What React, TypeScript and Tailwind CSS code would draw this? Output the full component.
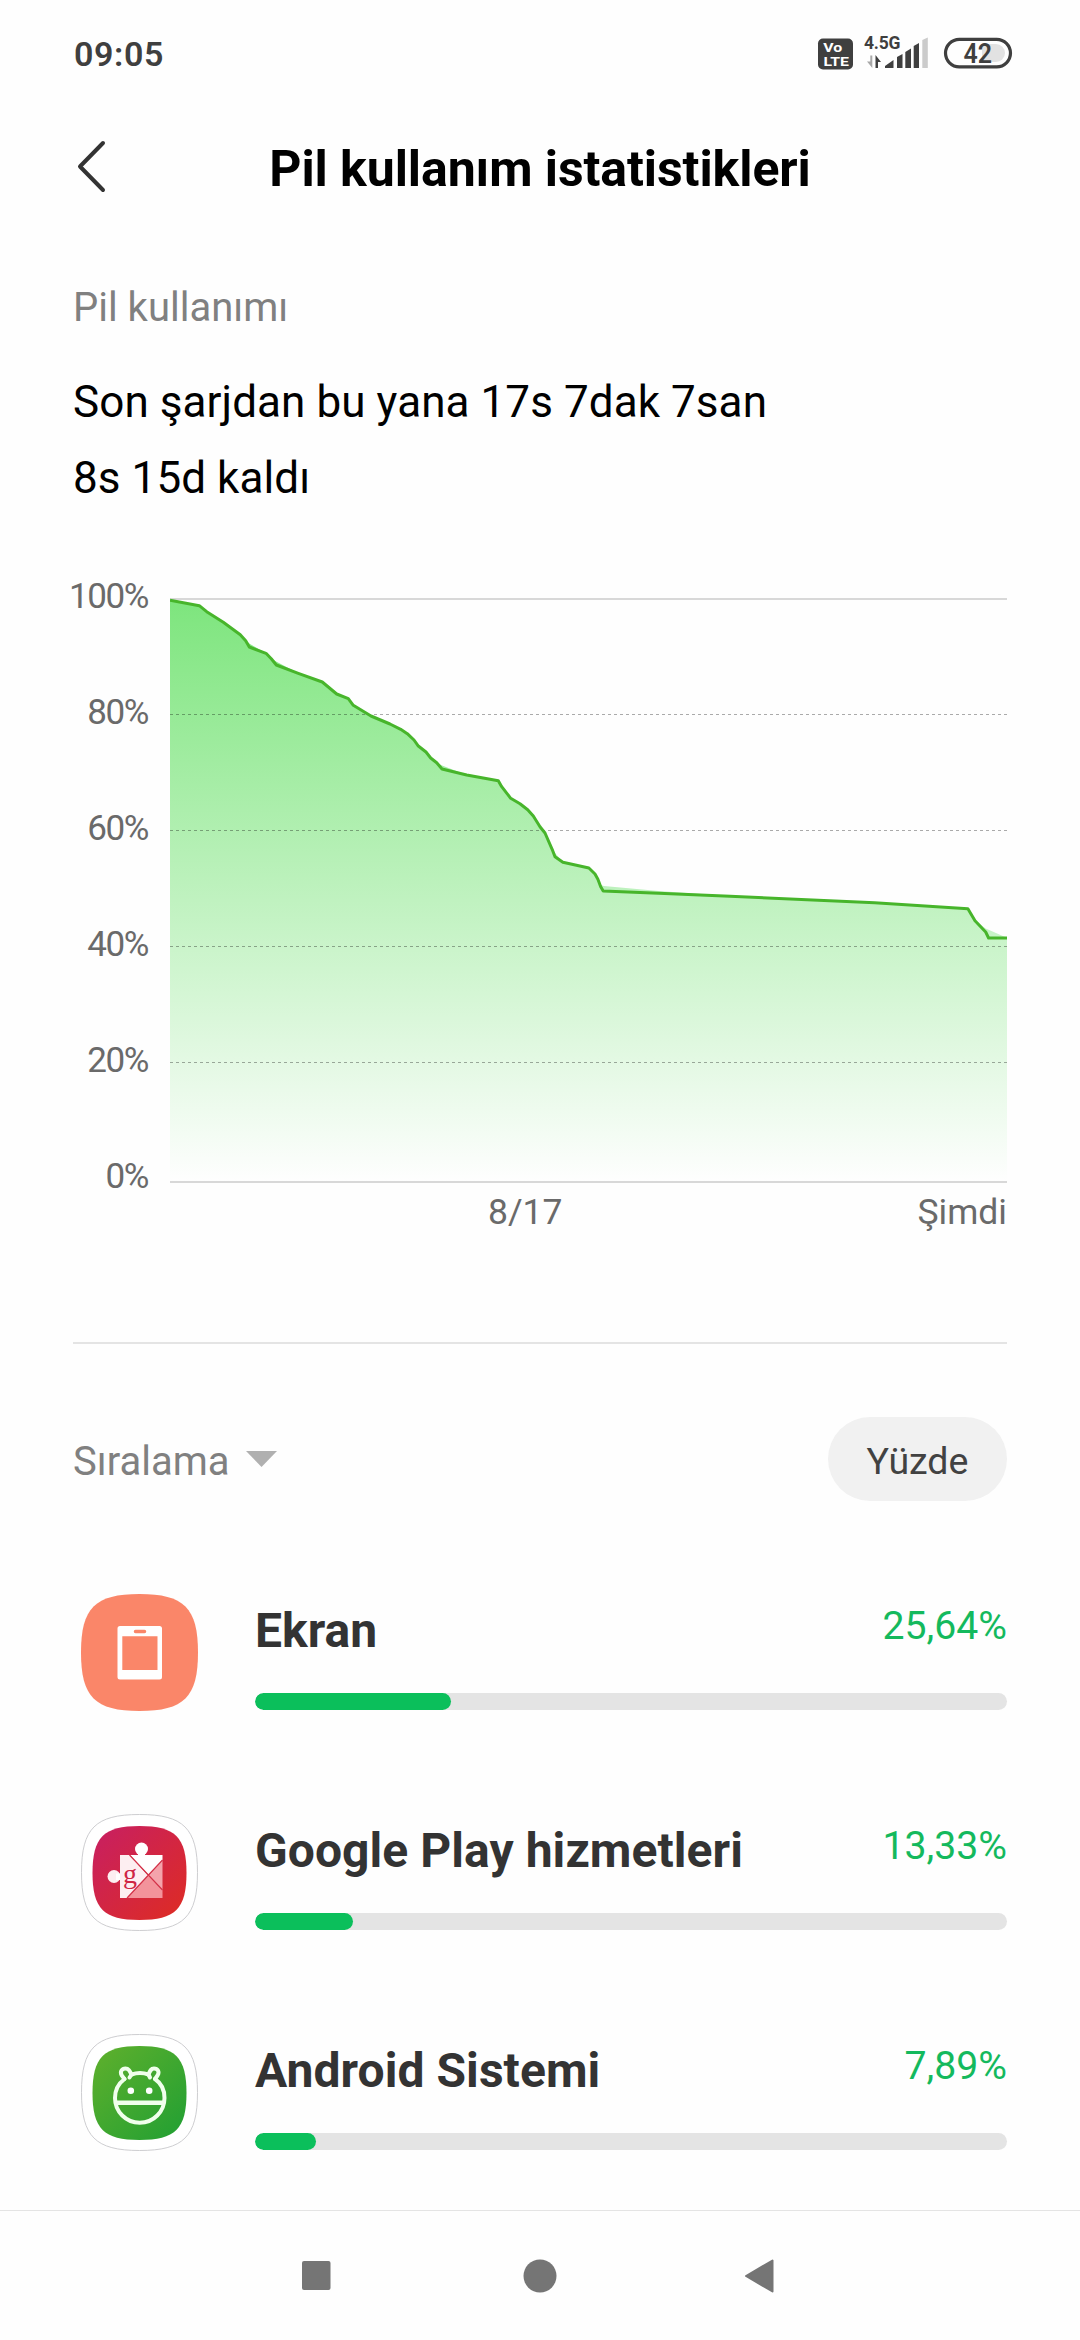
import React from "react";

const LINE =
  "M170 600.3L199.3 605.7L206.7 611.7L223.3 622.3L240.3 634.7L245.7 640.7L249.3 647L266 653.3L271.3 658.7L276.3 665L298.3 673.3L322.3 682L336.7 694L348.3 698.7L353.3 705.3L371 716L390 724L400.7 729.3L407.3 733.7L414 740L418 745.7L426 752L430.7 758L436.7 762.7L442 769L466.7 775L498.3 780.7L501.7 786.7L510.7 798.3L520 803.7L527.7 809.7L533.3 816L540 826.7L545 833L552.7 850.7L555 856.7L562.9 862.3L588.9 868L595 874L597.9 879.3L600.7 886.7L603.2 891L658.6 893.3L730 896.3L874.6 902.7L967.9 908.7L975 920.7L985.7 932L988.6 938L1007 938";

const AREA =
  "M170 600.3L199.3 605.7L206.7 611.7L223.3 622.3L240.3 634.7L245.7 640.7L250 644L266 653.3L271.3 658.7L277 662L298.3 673.3L322.3 682L336.7 694L348.3 698.7L353.3 705.3L371 716L390 724L400.7 729.3L407.3 733.7L414 740L418 745.7L426 752L430.7 758L436.7 762.7L442 765.5L466.7 775L498.3 780.7L501.7 786.7L510.7 798.3L520 803.7L527.7 809.7L533.3 816L540 826.7L545 833L555 853L562.9 862.3L588.9 868L595 874L600.7 885L604 886L658.6 891L730 896L874.6 902.7L967.9 908.7L975 920.7L985.7 928.5L1004 936.5L1007 938V1181H170Z";

const SQUIRCLE = "M0 50C0 12 12 0 50 0S100 12 100 50S88 100 50 100S0 88 0 50Z";

function StatusBar() {
  return (
    <div className="flex h-[108px] items-center justify-between pl-[74px] pr-[68px]">
      <span className="text-[34px] font-semibold leading-[108px] tracking-[0.6px] text-[#3f3f3f]">09:05</span>
      <svg width="196" height="40" viewBox="816 34 196 40" className="overflow-visible" fontFamily="Roboto, sans-serif">
        <rect x="818" y="38.5" width="35" height="31" rx="5" fill="#3f3f3f" />
        <text x="823.3" y="51.8" fontSize="13" fontWeight="700" fill="#fff" textLength="19" lengthAdjust="spacingAndGlyphs">Vo</text>
        <text x="823.5" y="66" fontSize="13.5" fontWeight="700" fill="#fff" textLength="25.5" lengthAdjust="spacingAndGlyphs">LTE</text>
        <text x="864" y="48.7" fontSize="17.5" fontWeight="700" fill="#3f3f3f" textLength="36.5">4.5G</text>
        <path d="M872.3 55.5V68L867 61.5H870.3V55.5Z" fill="#a8a8a8" />
        <path d="M875.5 68V55L881 62H878V68Z" fill="#3f3f3f" />
        <path d="M885 68V66L893.5 60V68Z" fill="#3f3f3f" />
        <path d="M897 68V57L902.5 54V68Z" fill="#3f3f3f" />
        <path d="M905.3 68V52L911 48.5V68Z" fill="#3f3f3f" />
        <path d="M913.7 68V46L919 43V68Z" fill="#3f3f3f" />
        <path d="M922.3 68V40L927.8 37.5V68Z" fill="#cbcbcb" />
        <rect x="945.5" y="39.3" width="65" height="27.6" rx="13.8" fill="none" stroke="#3f3f3f" strokeWidth="3.2" />
        <path d="M982 44H996A9 9 0 0 1 996 62H982Z" fill="#e2e2e2" />
        <text x="963.5" y="63" fontSize="27" fontWeight="600" fill="#3f3f3f" textLength="28.5" lengthAdjust="spacingAndGlyphs">42</text>
      </svg>
    </div>
  );
}

function Header() {
  return (
    <header className="grid h-[118px] grid-cols-[160px_1fr_160px] items-center">
      <svg width="34" height="56" viewBox="0 0 34 56" className="mb-[3px] ml-[74px]">
        <path d="M29 4L6 27.5L29 51" fill="none" stroke="#333" strokeWidth="4" strokeLinecap="round" strokeLinejoin="round" />
      </svg>
      <h1 className="whitespace-nowrap pt-0.5 text-center text-[50px] font-bold leading-[118px] tracking-[-0.08px] text-black">
        Pil kullanım istatistikleri
      </h1>
    </header>
  );
}

function Chart() {
  return (
    <section className="mt-[59px] flex h-[650px] shrink-0">
      <div className="flex w-[75px] shrink-0 flex-col items-end pt-px text-[35px] leading-[42px] tracking-[-1.4px] text-[#6a6a6a]">
        {["100%", "80%", "60%", "40%", "20%", "0%"].map((t) => (
          <span key={t} className="h-[116px] shrink-0">{t}</span>
        ))}
      </div>
      <div className="ml-[22px] flex w-[837px] shrink-0 flex-col pt-[22px]">
        <svg width="837" height="587" viewBox="170 597 837 587" className="block shrink-0">
          <defs>
            <linearGradient id="fill" gradientUnits="userSpaceOnUse" x1="0" y1="598" x2="0" y2="1181">
              <stop offset="0" stopColor="#7de57d" />
              <stop offset="1" stopColor="#fefefe" />
            </linearGradient>
          </defs>
          <rect x="170" y="598" width="837" height="2" fill="#d8d8d8" />
          <path d={AREA} fill="url(#fill)" />
          {[714, 830, 946, 1062].map((y) => (
            <path key={y} d={`M170 ${y + 0.5}H1007`} stroke="#000" strokeOpacity="0.33" strokeWidth="1" strokeDasharray="3 3" />
          ))}
          <path d={LINE} fill="none" stroke="#47b52b" strokeWidth="3" strokeLinejoin="round" />
          <rect x="170" y="1181" width="837" height="2" fill="#d8d8d8" />
        </svg>
        <div className="flex justify-between pl-[318px] text-[35.5px] leading-[56px] text-[#6a6a6a]">
          <span>8/17</span>
          <span>Şimdi</span>
        </div>
      </div>
    </section>
  );
}

function ScreenIcon() {
  return (
    <svg width="117" height="117" viewBox="0 0 117 117">
      <path d={SQUIRCLE} transform="scale(1.17)" fill="#fa8669" />
      <path
        fillRule="evenodd"
        d="M39 32H78.500Q81 32 81 34.500V83Q81 85.500 78.500 85.500H39Q36.500 85.500 36.500 83V34.500Q36.500 32 39 32ZM41.300 42.300V76H76.500V42.300ZM54.500 35.700A1.750 1.750 0 0 0 54.500 39.200H63.500A1.750 1.750 0 0 0 63.500 35.700Z"
        fill="#fff"
      />
    </svg>
  );
}

function PlayServicesIcon() {
  return (
    <svg width="117" height="117" viewBox="0 0 117 117">
      <defs>
        <linearGradient id="red" x1="0" y1="0" x2="1" y2="1">
          <stop offset="0" stopColor="#c71f63" />
          <stop offset="1" stopColor="#de2c22" />
        </linearGradient>
      </defs>
      <path d={SQUIRCLE} transform="translate(.5 .5) scale(1.16)" fill="#fff" stroke="#c9c9cc" strokeWidth="0.8" />
      <path d={SQUIRCLE} transform="translate(11.5 12) scale(.94)" fill="url(#red)" />
      <circle cx="60.500" cy="35" r="6.500" fill="#fff" />
      <circle cx="33" cy="62.500" r="6.500" fill="#fdeef1" />
      <path d="M57 38H64V43H57ZM35 59.500H41V66H35Z" fill="#fff" />
      <path d="M39 41H48.500L67 61.500L46 84H39Z" fill="#fdeef1" />
      <path d="M49 41H81.500V46L67.500 61Z" fill="#fff" />
      <path d="M81.500 46V76L67.500 61.500Z" fill="#f4a3ab" />
      <path d="M46.500 84L67.500 61.500L81.500 76V84Z" fill="#f3939b" />
      <path d="M48.500 41L81.500 76M81.500 46L46 84" stroke="#d43249" strokeWidth="1.100" />
      <text x="42" y="68.500" fontSize="28" fontFamily="Liberation Serif, serif" fill="#cf2645">g</text>
    </svg>
  );
}

function AndroidIcon() {
  return (
    <svg width="117" height="117" viewBox="0 0 117 117">
      <defs>
        <linearGradient id="green" x1="0" y1="0" x2="1" y2="1">
          <stop offset="0" stopColor="#60b02c" />
          <stop offset="1" stopColor="#209f33" />
        </linearGradient>
      </defs>
      <path d={SQUIRCLE} transform="translate(.5 .5) scale(1.16)" fill="#fff" stroke="#c9c9cc" strokeWidth="0.8" />
      <path d={SQUIRCLE} transform="translate(11.5 12) scale(.94)" fill="url(#green)" />
      <g fill="none" stroke="#f0ffec" strokeWidth="4" strokeLinecap="round" strokeLinejoin="round">
        <path d="M50.500 40.500Q59 37.500 67.500 40.500M74 45C80.500 49.500 83.500 56 83.500 64A24.700 24.700 0 0 1 34 64C34 56 37.500 49.500 43.500 45" />
        <path d="M43.500 45L40.800 41.500C38.500 37.500 41 34.500 44.500 34.500C47.500 34.500 48.500 36.500 50.500 40.500L48.500 43.500M74 45L76.500 41.500C79 37.500 76.500 34.500 73 34.500C70 34.500 69 36.500 67.500 40.500L69 43.500" />
        <path d="M36 68.700H82" strokeWidth="4.500" />
      </g>
      <circle cx="49.800" cy="56.700" r="3.300" fill="#fff" />
      <circle cx="68.200" cy="56.700" r="3.300" fill="#fff" />
    </svg>
  );
}

const APPS = [
  { name: "Ekran", pct: "25,64%", width: 196, icon: <ScreenIcon /> },
  { name: "Google Play hizmetleri", pct: "13,33%", width: 98, icon: <PlayServicesIcon /> },
  { name: "Android Sistemi", pct: "7,89%", width: 61, icon: <AndroidIcon /> },
];

export default function App() {
  return (
    <div className="flex h-[2340px] w-[1080px] flex-col overflow-hidden bg-[#fefefe] font-['Roboto',sans-serif]">
      <StatusBar />
      <Header />
      <main className="flex h-[1984px] flex-col px-[73px]">
        <h2 className="mt-[52px] text-[40px] leading-[60px] text-[#808080]">Pil kullanımı</h2>
        <p className="mt-[26px] text-[44px] leading-[76px] tracking-[0.08px] text-black">
          Son şarjdan bu yana 17s 7dak 7san
          <br />
          8s 15d kaldı
        </p>
        <Chart />
        <div className="mt-[117px] h-[2px] shrink-0 bg-[#e4e4e4]" />
        <div className="mt-[73px] flex h-[84px] shrink-0 items-center justify-between">
          <div className="flex items-center text-[40px] text-[#808080]">
            <span className="pt-1.5">Sıralama</span>
            <svg width="31" height="16" viewBox="0 0 31 16" className="ml-4">
              <path d="M0 0H31L15.500 16Z" fill="#b0b0b0" />
            </svg>
          </div>
          <button className="flex h-[84px] w-[179px] items-center justify-center rounded-full bg-[#f1f1f1] pt-1 text-[37.5px] text-[#424242]">Yüzde</button>
        </div>
        <div className="mt-[93px] flex flex-col gap-[103px]">
          {APPS.map((a) => (
            <div key={a.name} className="flex h-[117px] pl-2">
              {a.icon}
              <div className="ml-[57px] flex flex-1 flex-col">
                <div className="flex h-[99px] justify-between">
                  <span className="text-[48px] font-bold leading-[74px] tracking-[0.06px] text-[#333]">{a.name}</span>
                  <span className="text-[39.2px] leading-[64px] text-[#14b95d]">{a.pct}</span>
                </div>
                <div className="h-[17px] w-[752px] overflow-hidden rounded-full bg-[#e4e4e4]">
                  <div className="h-full rounded-full bg-[#0bbf5b]" style={{ width: a.width }} />
                </div>
              </div>
            </div>
          ))}
        </div>
      </main>
      <nav className="flex h-[130px] items-center border-t border-[#e4e4e4] pl-[302px]">
        <svg width="29" height="29"><rect width="28.500" height="29" rx="2" fill="#757575" /></svg>
        <svg width="34" height="34" className="ml-[192px]"><circle cx="17" cy="17" r="16.500" fill="#757575" /></svg>
        <svg width="30" height="34" className="ml-[187px]"><path d="M2 17L28.500 1.500V32.500Z" fill="#757575" stroke="#757575" strokeWidth="2" strokeLinejoin="round" /></svg>
      </nav>
    </div>
  );
}
